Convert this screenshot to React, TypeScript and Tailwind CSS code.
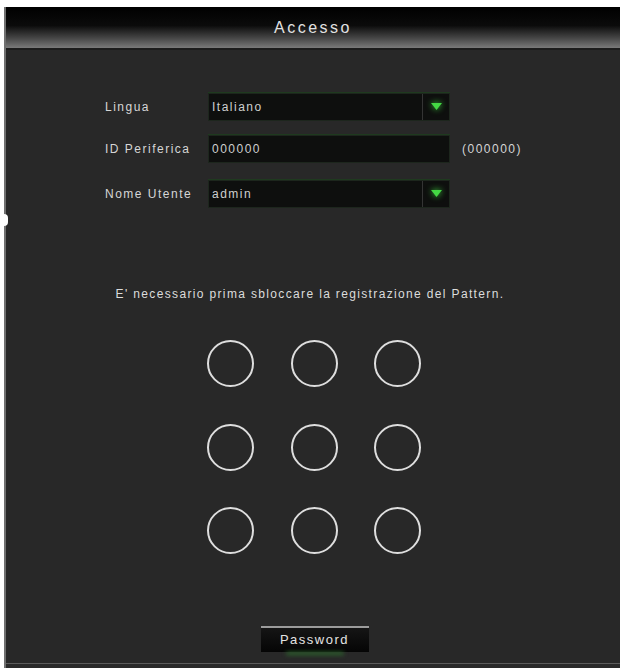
function Caret() {
  return (
    <div className="flex h-full w-[27px] items-center justify-center border-l border-[#343434]">
      <svg width="11" height="8" viewBox="0 0 11 8" className="drop-shadow-[0_0_3px_#3fdc3f]">
        <polygon points="0,0 11,0 5.5,7" fill="#44d844" />
      </svg>
    </div>
  );
}

function Field({ value, select }: { value: string; select?: boolean }) {
  return (
    <div className="flex h-[28px] w-[242px] items-center border border-[#1d261d] bg-[#0e0f0e] shadow-[0_-1px_0_#1f3a1f]">
      <span className="flex-1 pl-[3px] text-[12px] tracking-[1.5px] text-[#cfcfcf]">{value}</span>
      {select && <Caret />}
    </div>
  );
}

function Row({ label, children, className }: { label: string; children: React.ReactNode; className?: string }) {
  return (
    <div className={"flex items-center " + (className ?? "")}>
      <span className="w-[103px] text-[12px] tracking-[1.5px] text-[#d6d6d6]">{label}</span>
      {children}
    </div>
  );
}

export default function App() {
  const dots = Array.from({ length: 9 });
  return (
    <div
      className="relative flex h-[668px] w-[620px] flex-col bg-white pl-[4px] pt-[7px]"
      style={{ fontFamily: '"Liberation Sans", Arial, sans-serif' }}
    >
      <div className="flex flex-1 flex-col border-l-2 border-[#707070] bg-[#282828]">
        {/* title bar */}
        <div className="flex h-[43px] items-center justify-center border-b-2 border-[#1c1c1c] bg-[linear-gradient(to_bottom,#000_0%,#0b0b0b_45%,#444_75%,#7a7a7a_100%)]">
          <span className="text-[16px] tracking-[2.5px] text-[#e2e2e2]">Accesso</span>
        </div>

        {/* form */}
        <div className="flex flex-col pl-[99px] pt-[43px]">
          <Row label="Lingua">
            <Field value="Italiano" select />
          </Row>
          <Row label="ID Periferica" className="mt-[14px]">
            <Field value="000000" />
            <span className="ml-[12px] text-[12px] tracking-[1.5px] text-[#d6d6d6]">(000000)</span>
          </Row>
          <Row label="Nome Utente" className="mt-[17px]">
            <Field value="admin" select />
          </Row>
        </div>

        <p className="mt-[78px] pr-[6px] text-center text-[12px] leading-[16px] tracking-[1.35px] text-[#dcdcdc]">
          E' necessario prima sbloccare la registrazione del Pattern.
        </p>

        {/* pattern grid */}
        <div className="mt-[38px] flex justify-center pl-[2px]">
          <div className="grid grid-cols-3 gap-[36.5px]">
            {dots.map((_, i) => (
              <div key={i} className="h-[47px] w-[47px] rounded-full border-2 border-[#dedede]" />
            ))}
          </div>
        </div>

        {/* password button */}
        <div className="mt-[72px] flex justify-center pl-[3px]">
          <div className="relative flex h-[26px] w-[108px] flex-col">
            <div className="h-[2px] bg-[#9c9c9c]" />
            <div className="flex flex-1 items-center justify-center bg-[linear-gradient(to_bottom,#151515,#050505)]">
              <span className="text-[13px] tracking-[1.5px] text-[#e4e4e4]">Password</span>
            </div>
            <div className="absolute -bottom-[3px] left-[25px] h-[3px] w-[58px] rounded-full bg-[#2c6a2c] blur-[2px]" />
          </div>
        </div>

        <div className="flex-1" />
        <div className="h-px bg-[#5c5c5c]" />
        <div className="h-[4px] bg-[#2a2a2a]" />
      </div>

      {/* stray cursor mark on the left edge */}
      <div className="absolute left-[4px] top-[214px] h-[12px] w-[4px] rounded-r-full bg-white" />
    </div>
  );
}
